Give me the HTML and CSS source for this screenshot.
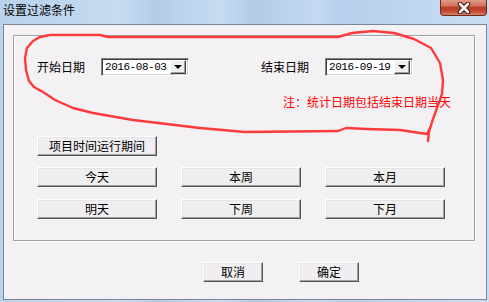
FILE: index.html
```html
<!DOCTYPE html>
<html lang="zh-CN">

<head>
    <meta charset="UTF-8">
    <title>设置过滤条件</title>
    <link rel="stylesheet" href="styles.css">
</head>

<body>

    <div class="window">
        <div class="titlebar">
            <span class="title">设置过滤条件</span>
            <button class="close">
                <svg width="16" height="12" viewBox="0 0 16 12">
                    <path d="M4 2 L12 10 M12 2 L4 10" stroke="#3d1a14" stroke-width="4.6" stroke-linecap="round" fill="none"/>
                    <path d="M4 2 L12 10 M12 2 L4 10" stroke="#fff" stroke-width="2.6" stroke-linecap="round" fill="none"/>
                </svg>
            </button>
        </div>

        <div class="client">
            <div class="group">
                <div class="date-row">
                    <div class="field">
                        <span class="label">开始日期</span>
                        <div class="datebox">
                            <span class="date-text">2016-08-03</span>
                            <span class="drop"><i class="arrow"></i></span>
                        </div>
                    </div>
                    <div class="field">
                        <span class="label">结束日期</span>
                        <div class="datebox">
                            <span class="date-text">2016-09-19</span>
                            <span class="drop"><i class="arrow"></i></span>
                        </div>
                    </div>
                </div>

                <div class="note">注：统计日期包括结束日期当天</div>

                <button class="btn btn-first">项目时间运行期间</button>

                <div class="btn-grid">
                    <button class="btn">今天</button>
                    <button class="btn">本周</button>
                    <button class="btn">本月</button>
                    <button class="btn">明天</button>
                    <button class="btn">下周</button>
                    <button class="btn">下月</button>
                </div>
            </div>

            <div class="actions">
                <button class="btn btn-small">取消</button>
                <button class="btn btn-small">确定</button>
            </div>
        </div>

        <!-- red freehand mark drawn over the dialog -->
        <svg class="scribble" width="489" height="302" viewBox="0 0 489 302">
            <path d="M428 141 L429 132 L432 122 L437 108 L442 94 L443 80 L440 63 L431 48 L414 39 L394 33 L373 31 L352 33 L338 37 L240 37 L108 37 L100 35 L50 35 L40 37 L33 41 L27 48 L25 58 L26 70 L29 81 L34 87 L43 92 L55 100 L73 108 L93 113 L133 120 L200 128 L245 132 L338 131 L346 128 L367 129 L400 130 L427 134 L431 126"
                fill="none" stroke="#ff3a3a" stroke-width="2.4" stroke-linejoin="round" stroke-linecap="round"/>
        </svg>
    </div>

</body>

</html>
```

FILE: styles.css
```css
body {
    margin: 0;
    font-family: "Noto Sans CJK SC", "Liberation Sans", sans-serif;
    font-size: 12px;
}

.window {
    position: relative;
    width: 489px;
    height: 302px;
    box-sizing: border-box;
    background: linear-gradient(to right, #b9d2ec, #c5dbf1 25%, #b3cce7 32%, #c6dcf2 45%, #b2cbe6 52%, #c4daf1 65%, #b6cfea 70%, #c8def4);
    display: flex;
    flex-direction: column;
}

.titlebar {
    height: 24px;
    display: flex;
    justify-content: space-between;
    align-items: flex-start;
}

.title {
    margin: 4px 0 0 3px;
    line-height: 12px;
    color: #000;
}

.close {
    width: 47px;
    height: 16px;
    margin-right: 2px;
    padding: 0;
    border: 1px solid #6e2a1c;
    border-top: none;
    border-radius: 0 0 4px 4px;
    background: linear-gradient(#e49a88, #d0705a 40%, #bd3c24 50%, #c24a31 75%, #d9816b);
    display: flex;
    justify-content: center;
    align-items: center;
}

.client {
    margin: 0 2px 2px 3px;
    height: 276px;
    box-sizing: border-box;
    border: 1px solid #7a8796;
    background-color: #f3f1f4;
}

.group {
    margin: 10px 0 0 9px;
    width: 462px;
    height: 206px;
    box-sizing: border-box;
    border: 1px solid #a0a0a0;
    box-shadow: 1px 1px 0 #fff, inset 1px 1px 0 #fff;
}

.date-row {
    display: flex;
    gap: 72px;
    margin-top: 22px;
    padding-left: 23px;
}

.field {
    display: flex;
    align-items: center;
}

.label {
    width: 64px;
    line-height: 12px;
}

.datebox {
    width: 88px;
    height: 18px;
    box-sizing: border-box;
    border: 1px solid;
    border-color: #808080 #fff #fff #808080;
    box-shadow: inset 1px 1px 0 #404040, inset -1px -1px 0 #d4d0c8;
    background-color: #fff;
    display: flex;
    align-items: center;
    padding: 2px 2px 2px 3px;
}

.date-text {
    flex: 1;
    font-family: "Liberation Mono", monospace;
    font-size: 11px;
    letter-spacing: -0.45px;
    line-height: 12px;
}

.drop {
    width: 16px;
    height: 14px;
    box-sizing: border-box;
    border: 1px solid;
    border-color: #fff #404040 #404040 #fff;
    box-shadow: inset -1px -1px 0 #a0a0a0;
    background-color: #f0eff0;
    display: flex;
    justify-content: center;
    align-items: center;
}

.arrow {
    width: 0;
    height: 0;
    border-left: 4px solid transparent;
    border-right: 4px solid transparent;
    border-top: 4px solid #000;
}

.note {
    margin-top: 20px;
    padding-left: 269px;
    line-height: 12px;
    color: #ff0000;
}

.btn {
    width: 120px;
    height: 20px;
    box-sizing: border-box;
    padding: 0;
    border: 1px solid;
    border-color: #fff #555 #555 #fff;
    box-shadow: inset -1px -1px 0 #a0a0a0, inset 1px 1px 0 #e6e4e7;
    background-color: #f0eef1;
    font-family: inherit;
    font-size: 12px;
    line-height: 12px;
    color: #000;
}

.btn-first {
    display: block;
    margin: 28px 0 0 23px;
}

.btn-grid {
    display: grid;
    grid-template-columns: repeat(3, 120px);
    column-gap: 24px;
    row-gap: 12px;
    margin: 11px 0 0 23px;
}

.actions {
    display: flex;
    gap: 36px;
    margin-top: 21px;
    padding-left: 199px;
}

.btn-small {
    width: 60px;
}

.scribble {
    position: absolute;
    left: 0;
    top: 0;
    pointer-events: none;
}
```
